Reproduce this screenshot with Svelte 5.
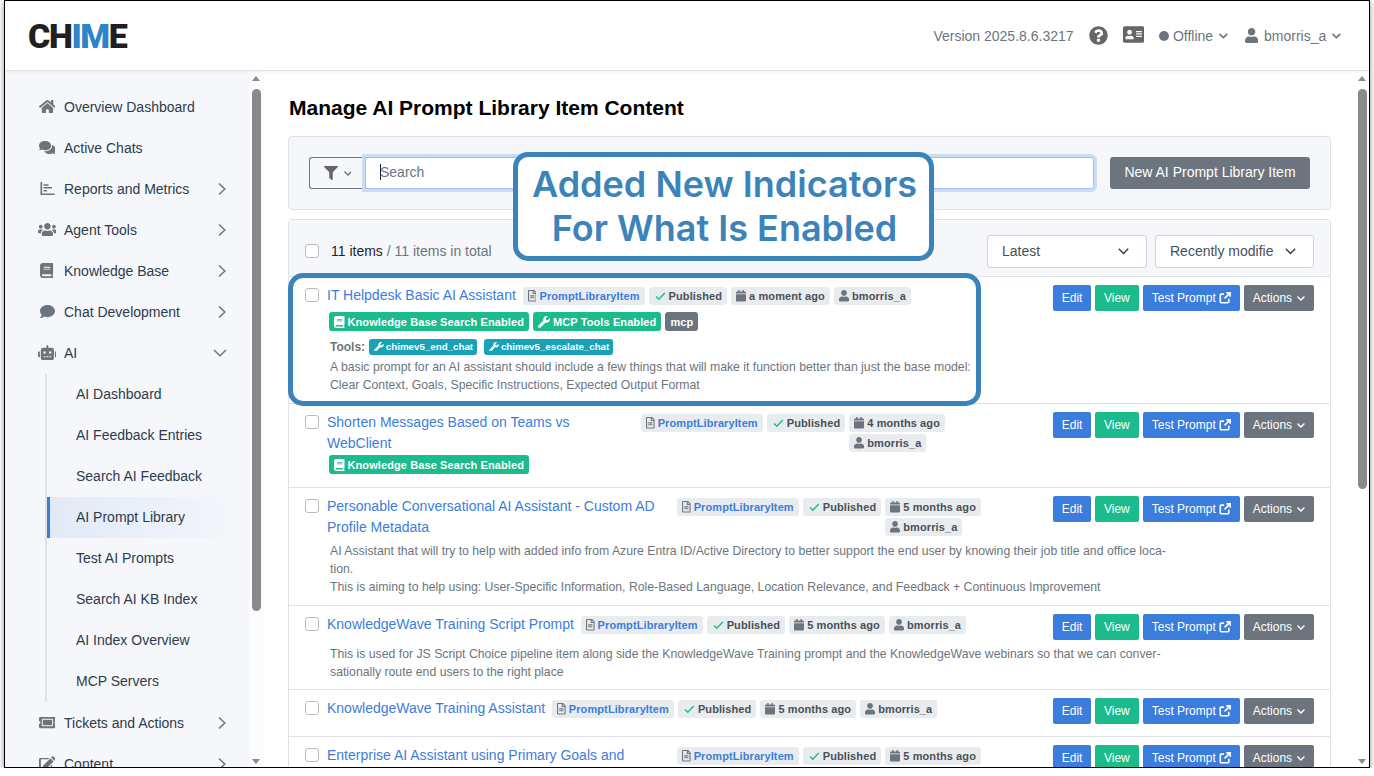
<script>
	const icons = {
		home: ["0 0 576 512", "M280.37 148.26L96 300.11V464a16 16 0 0 0 16 16l112.06-.29a16 16 0 0 0 15.92-16V368a16 16 0 0 1 16-16h64a16 16 0 0 1 16 16v95.64a16 16 0 0 0 16 16.05L464 480a16 16 0 0 0 16-16V300L295.67 148.26a12.19 12.19 0 0 0-15.3 0zM571.6 251.47L488 182.56V44.05a12 12 0 0 0-12-12h-56a12 12 0 0 0-12 12v72.61L318.47 43a48 48 0 0 0-61 0L4.34 251.47a12 12 0 0 0-1.6 16.9l25.5 31A12 12 0 0 0 45.15 301l235.22-193.74a12.19 12.19 0 0 1 15.3 0L530.9 301a12 12 0 0 0 16.9-1.6l25.5-31a12 12 0 0 0-1.7-16.93z"],
		comments: ["0 0 576 512", "M416 192c0-88.4-93.1-160-208-160S0 103.6 0 192c0 34.3 14.1 65.9 38 92-13.4 30.2-35.5 54.2-35.8 54.5-2.2 2.3-2.8 5.7-1.5 8.7S4.8 352 8 352c36.6 0 66.9-12.3 88.7-25 32.2 15.7 70.3 25 111.3 25 114.9 0 208-71.6 208-160zm122 220c23.9-26 38-57.7 38-92 0-66.9-53.5-124.2-129.3-148.1.9 6.6 1.3 13.3 1.3 20.1 0 105.9-107.7 192-240 192-10.8 0-21.3-.8-31.7-1.9C207.8 439.6 281.8 480 368 480c41 0 79.1-9.2 111.3-25 21.8 12.7 52.1 25 88.7 25 3.2 0 6.1-1.9 7.3-4.8 1.3-2.9.7-6.3-1.5-8.7-.3-.3-22.4-24.2-35.8-54.5z"],
		chart: ["0 0 512 512", "M16 32h56v392h424v56H16zM120 112h170v52H120zM120 208h290v52H120zM120 304h120v52H120z"],
		users: ["0 0 640 512", "M96 224c35.3 0 64-28.7 64-64s-28.7-64-64-64-64 28.7-64 64 28.7 64 64 64zm448 0c35.3 0 64-28.7 64-64s-28.7-64-64-64-64 28.7-64 64 28.7 64 64 64zm32 32h-64c-17.6 0-33.5 7.1-45.1 18.6 40.3 22.1 68.9 62 75.1 109.4h66c17.7 0 32-14.3 32-32v-32c0-35.3-28.7-64-64-64zm-256 0c61.9 0 112-50.1 112-112S381.9 32 320 32 208 82.1 208 144s50.1 112 112 112zm76.8 32h-8.3c-20.8 10-43.9 16-68.5 16s-47.6-6-68.5-16h-8.3C179.6 288 128 339.6 128 403.2V432c0 26.5 21.5 48 48 48h288c26.5 0 48-21.5 48-48v-28.8c0-63.6-51.6-115.2-115.2-115.2zm-223.7-13.4C161.5 263.1 145.6 256 128 256H64c-35.3 0-64 28.7-64 64v32c0 17.7 14.3 32 32 32h65.9c6.3-47.4 34.9-87.3 75.2-109.4z"],
		book: ["0 0 448 512", "M448 360V24c0-13.3-10.7-24-24-24H96C43 0 0 43 0 96v320c0 53 43 96 96 96h328c13.3 0 24-10.7 24-24v-16c0-7.5-3.5-14.3-8.9-18.7-4.2-15.4-4.2-59.3 0-74.7 5.4-4.3 8.9-11.1 8.9-18.6zM128 134c0-3.3 2.7-6 6-6h212c3.3 0 6 2.7 6 6v20c0 3.3-2.7 6-6 6H134c-3.3 0-6-2.7-6-6v-20zm0 64c0-3.3 2.7-6 6-6h212c3.3 0 6 2.7 6 6v20c0 3.3-2.7 6-6 6H134c-3.3 0-6-2.7-6-6v-20zm253.4 250H96c-17.7 0-32-14.3-32-32 0-17.6 14.4-32 32-32h285.4c-1.9 17.1-1.9 46.9 0 64z"],
		comment: ["0 0 512 512", "M256 32C114.6 32 0 125.1 0 240c0 49.6 21.4 95 57 130.7C44.5 421.1 2.7 466 2.2 466.5c-2.2 2.3-2.8 5.7-1.5 8.7S4.8 480 8 480c66.3 0 116-31.8 140.6-51.4 32.7 12.3 69 19.4 107.4 19.4 141.4 0 256-93.1 256-208S397.4 32 256 32z"],
		robot: ["0 0 640 512", "M32,224H64V416H32A31.96166,31.96166,0,0,1,0,384V256A31.96166,31.96166,0,0,1,32,224Zm512-48V448a64.06328,64.06328,0,0,1-64,64H160a64.06328,64.06328,0,0,1-64-64V176a79.974,79.974,0,0,1,80-80H288V32a32,32,0,0,1,64,0V96H464A79.974,79.974,0,0,1,544,176ZM264,256a40,40,0,1,0-40,40A39.997,39.997,0,0,0,264,256Zm-8,128H192v32h64Zm96,0H288v32h64ZM456,256a40,40,0,1,0-40,40A39.997,39.997,0,0,0,456,256Zm-8,128H384v32h64ZM640,256V384a31.96166,31.96166,0,0,1-32,32H576V224h32A31.96166,31.96166,0,0,1,640,256Z"],
		ticket: ["0 0 576 512", "M128 160h320v192H128V160zm400 96c0 26.51 21.49 48 48 48v96c0 26.51-21.49 48-48 48H48c-26.51 0-48-21.49-48-48v-96c26.51 0 48-21.49 48-48s-21.49-48-48-48v-96c0-26.51 21.49-48 48-48h480c26.51 0 48 21.49 48 48v96c-26.51 0-48 21.49-48 48zm-48-104c0-13.255-10.745-24-24-24H120c-13.255 0-24 10.745-24 24v208c0 13.255 10.745 24 24 24h336c13.255 0 24-10.745 24-24V152z"],
		edit: ["0 0 576 512", "M402 336v112H64V110h242l48-46H48C21 64 0 85 0 112v352c0 27 21 48 48 48h352c27 0 48-21 48-48V290zM490 14l72 72c10 10 10 26 0 36l-40 40-108-108 40-40c10-10 26-10 36 0zM390 78l108 108-256 256-118 12 12-118z"],
		user: ["0 0 448 512", "M224 256c70.7 0 128-57.3 128-128S294.7 0 224 0 96 57.3 96 128s57.3 128 128 128zm89.6 32h-16.7c-22.2 10.2-46.9 16-72.9 16s-50.6-5.8-72.9-16h-16.7C60.2 288 0 348.2 0 422.4V464c0 26.5 21.5 48 48 48h352c26.5 0 48-21.5 48-48v-41.6c0-74.2-60.2-134.4-134.4-134.4z"],
		wrench: ["0 0 512 512", "M507.73 109.1c-2.24-9.03-13.54-12.09-20.12-5.51l-74.36 74.36-67.88-11.31-11.31-67.88 74.36-74.36c6.62-6.62 3.43-17.9-5.66-20.16-47.38-11.74-99.55.91-136.58 37.93-39.64 39.64-50.55 97.1-34.05 147.2L18.74 402.76c-24.99 24.99-24.99 65.51 0 90.5 24.99 24.99 65.51 24.99 90.5 0l213.21-213.21c50.12 16.71 107.47 5.68 147.37-34.22 37.07-37.07 49.7-89.32 37.91-136.73zM64 472c-13.25 0-24-10.75-24-24 0-13.26 10.75-24 24-24s24 10.74 24 24c0 13.25-10.75 24-24 24z"],
		filter: ["0 0 512 512", "M487.976 0H24.028C2.71 0-8.047 25.866 7.058 40.971L192 225.941V432c0 7.831 3.821 15.17 10.237 19.662l80 55.98C298.02 518.69 320 507.493 320 487.98V225.941l184.947-184.97C520.021 25.896 509.338 0 487.976 0z"],
		down: ["0 0 448 512", "M207.029 381.476L12.686 187.132c-9.373-9.373-9.373-24.569 0-33.941l22.667-22.667c9.357-9.357 24.522-9.375 33.901-.04L224 284.505l154.745-154.021c9.379-9.335 24.544-9.317 33.901.04l22.667 22.667c9.373 9.373 9.373 24.569 0 33.941L240.971 381.476c-9.373 9.372-24.569 9.372-33.942 0z"],
		help: ["0 0 512 512", "M504 256c0 136.997-111.043 248-248 248S8 392.997 8 256C8 119.083 119.043 8 256 8s248 111.083 248 248zM262.655 90c-54.497 0-89.255 22.957-116.549 63.758-3.536 5.286-2.353 12.415 2.715 16.258l34.699 26.31c5.205 3.947 12.621 3.008 16.665-2.122 17.864-22.658 30.113-35.797 57.303-35.797 20.429 0 45.698 13.148 45.698 32.958 0 14.976-12.363 22.667-32.534 33.976C247.128 238.528 216 254.941 216 296v4c0 6.627 5.373 12 12 12h56c6.627 0 12-5.373 12-12v-1.333c0-28.462 83.186-29.647 83.186-106.667 0-58.002-60.165-102-116.531-102zM256 338c-25.365 0-46 20.635-46 46 0 25.364 20.635 46 46 46s46-20.636 46-46c0-25.365-20.635-46-46-46z"],
		card: ["0 0 576 512", "M528 32H48C21.5 32 0 53.5 0 80v352c0 26.5 21.5 48 48 48h480c26.5 0 48-21.5 48-48V80c0-26.5-21.5-48-48-48zm-352 96c35.3 0 64 28.7 64 64s-28.7 64-64 64-64-28.7-64-64 28.7-64 64-64zm112 236.8c0 10.6-10 19.2-22.4 19.2H86.4C74 384 64 375.4 64 364.8v-19.2c0-31.8 30.1-57.6 67.2-57.6h5c12.3 5.1 25.7 8 39.8 8s27.6-2.9 39.8-8h5c37.1 0 67.2 25.8 67.2 57.6v19.2zM512 312c0 4.4-3.6 8-8 8H360c-4.4 0-8-3.6-8-8v-16c0-4.4 3.6-8 8-8h144c4.4 0 8 3.6 8 8v16zm0-64c0 4.4-3.6 8-8 8H360c-4.4 0-8-3.6-8-8v-16c0-4.4 3.6-8 8-8h144c4.4 0 8 3.6 8 8v16zm0-64c0 4.4-3.6 8-8 8H360c-4.4 0-8-3.6-8-8v-16c0-4.4 3.6-8 8-8h144c4.4 0 8 3.6 8 8v16z"],
		calendar: ["0 0 448 512", "M12 192h424c6.6 0 12 5.4 12 12v260c0 26.5-21.5 48-48 48H48c-26.5 0-48-21.5-48-48V204c0-6.6 5.4-12 12-12zm436-44v-36c0-26.5-21.5-48-48-48h-48V12c0-6.6-5.4-12-12-12h-40c-6.6 0-12 5.4-12 12v52H160V12c0-6.6-5.4-12-12-12h-40c-6.6 0-12 5.4-12 12v52H48C21.5 64 0 85.5 0 112v36c0 6.6 5.4 12 12 12h424c6.6 0 12-5.4 12-12z"],
		file: ["0 0 384 512", "M288 248v28c0 6.6-5.4 12-12 12H108c-6.6 0-12-5.4-12-12v-28c0-6.6 5.4-12 12-12h168c6.6 0 12 5.4 12 12zm-12 72H108c-6.6 0-12 5.4-12 12v28c0 6.6 5.4 12 12 12h168c6.6 0 12-5.4 12-12v-28c0-6.6-5.4-12-12-12zm108-188.100V464c0 26.5-21.5 48-48 48H48c-26.5 0-48-21.5-48-48V48C0 21.5 21.5 0 48 0h204.100C264.800 0 277 5.100 286 14.100L369.900 98c9 8.900 14.100 21.200 14.100 33.900zm-128-80V128h76.100L256 51.900zM336 464V176H232c-13.300 0-24-10.700-24-24V48H48v416h288z"]
	};

	const nav = [
		{ label: "Overview Dashboard", icon: "home" },
		{ label: "Active Chats", icon: "comments" },
		{ label: "Reports and Metrics", icon: "chart", more: true },
		{ label: "Agent Tools", icon: "users", more: true },
		{ label: "Knowledge Base", icon: "book", more: true },
		{ label: "Chat Development", icon: "comment", more: true },
		{
			label: "AI",
			icon: "robot",
			open: true,
			children: ["AI Dashboard", "AI Feedback Entries", "Search AI Feedback", "AI Prompt Library", "Test AI Prompts", "Search AI KB Index", "AI Index Overview", "MCP Servers"]
		},
		{ label: "Tickets and Actions", icon: "ticket", more: true },
		{ label: "Content", icon: "edit", more: true }
	];

	const rows = [
		{
			title: "IT Helpdesk Basic AI Assistant",
			when: "a moment ago",
			height: 127,
			tags: [{ icon: "book", text: "Knowledge Base Search Enabled" }, { icon: "wrench", text: "MCP Tools Enabled" }],
			extra: "mcp",
			tools: ["chimev5_end_chat", "chimev5_escalate_chat"],
			desc: ["A basic prompt for an AI assistant should include a few things that will make it function better than just the base model:", "Clear Context, Goals, Specific Instructions, Expected Output Format"]
		},
		{
			title: "Shorten Messages Based on Teams vs WebClient",
			titleWidth: 307,
			stacked: true,
			when: "4 months ago",
			height: 84,
			tags: [{ icon: "book", text: "Knowledge Base Search Enabled" }]
		},
		{
			title: "Personable Conversational AI Assistant - Custom AD Profile Metadata",
			titleWidth: 343,
			stacked: true,
			when: "5 months ago",
			height: 118,
			desc: ["AI Assistant that will try to help with added info from Azure Entra ID/Active Directory to better support the end user by knowing their job title and office loca-", "tion.", "This is aiming to help using: User-Specific Information, Role-Based Language, Location Relevance, and Feedback + Continuous Improvement"]
		},
		{
			title: "KnowledgeWave Training Script Prompt",
			when: "5 months ago",
			height: 84,
			desc: ["This is used for JS Script Choice pipeline item along side the KnowledgeWave Training prompt and the KnowledgeWave webinars so that we can conver-", "sationally route end users to the right place"]
		},
		{ title: "KnowledgeWave Training Assistant", when: "5 months ago", height: 47 },
		{
			title: "Enterprise AI Assistant using Primary Goals and",
			titleWidth: 343,
			stacked: true,
			when: "5 months ago",
			height: 60
		}
	];
</script>

{#snippet icon(name, cls = "")}
	<svg class="ic {cls}" viewBox={icons[name][0]} aria-hidden="true"><path d={icons[name][1]} /></svg>
{/snippet}

{#snippet scrollbar(cls)}
	<div class="scrollbar {cls}">
		<span class="arrow up"></span>
		<span class="thumb"></span>
		<span class="arrow dn"></span>
	</div>
{/snippet}

<div class="frame">
	<header>
		<div class="logo">CH<span>IM</span>E</div>
		<div class="top-right">
			<span class="version">Version 2025.8.6.3217</span>
			{@render icon("help", "help")}
			{@render icon("card", "idcard")}
			<span class="drop status"><i class="dot"></i>Offline{@render icon("down", "caret")}</span>
			<span class="drop who">{@render icon("user", "who-ic")}bmorris_a{@render icon("down", "caret")}</span>
		</div>
	</header>

	<div class="body">
		<nav>
			<ul class="menu">
				{#each nav as item}
					<li>
						<div class="link">
							<span class="nav-ic">{@render icon(item.icon)}</span>
							<span class="label">{item.label}</span>
							{#if item.more}
								<svg class="chev" viewBox="0 0 8 14"><path d="M1 1.500 6.800 7 1 12.500" /></svg>
							{:else if item.open}
								<svg class="chev open" viewBox="0 0 14 8"><path d="M1 1 7 6.800 13 1" /></svg>
							{/if}
						</div>
						{#if item.children}
							<ul class="sub">
								{#each item.children as child}
									<li class:active={child === "AI Prompt Library"}>{child}</li>
								{/each}
							</ul>
						{/if}
					</li>
				{/each}
			</ul>
		</nav>
		{@render scrollbar("side")}

		<main>
			<h1>Manage AI Prompt Library Item Content</h1>

			<section class="search-card">
				<button class="filter">{@render icon("filter", "filter-ic")}{@render icon("down", "caret")}</button>
				<div class="search"><i class="cursor"></i>Search</div>
				<button class="new">New AI Prompt Library Item</button>
			</section>

			<section class="list">
				<div class="list-head">
					<span class="check"></span>
					<span class="count"><b>11 items</b> / 11 items in total</span>
					<div class="select s1">Latest<svg viewBox="0 0 11 7"><path d="M.8.8 5.500 5.500 10.200.8" /></svg></div>
					<div class="select s2">Recently modifie<svg viewBox="0 0 11 7"><path d="M.8.8 5.500 5.500 10.200.8" /></svg></div>
				</div>

				{#each rows as row}
					<article class="row" class:wrapped={row.stacked} style="height: {row.height}px">
						<div class="row-main">
							<div class="head-line">
								<span class="check"></span>
								<a class="title" href="#top" style={row.titleWidth ? `width: ${row.titleWidth}px` : ""}>{row.title}</a>
								<div class="meta">
									<span class="badge type">{@render icon("file")}PromptLibraryItem</span>
									<span class="badge"><svg class="tick" viewBox="0 0 12 12"><path d="M2 6.500 4.800 9.300 10.800 3" /></svg>Published</span>
									<div class="when" class:stacked={row.stacked}>
										<span class="badge">{@render icon("calendar")}{row.when}</span>
										<span class="badge">{@render icon("user")}bmorris_a</span>
									</div>
								</div>
							</div>
							{#if row.tags}
								<div class="tags">
									{#each row.tags as tag}
										<span class="tag">{@render icon(tag.icon)}{tag.text}</span>
									{/each}
									{#if row.extra}<span class="tag extra">{row.extra}</span>{/if}
								</div>
							{/if}
							{#if row.tools}
								<div class="tools">
									<b>Tools:</b>
									{#each row.tools as tool}
										<span class="tool">{@render icon("wrench")}{tool}</span>
									{/each}
								</div>
							{/if}
							{#if row.desc}
								<div class="desc">
									{#each row.desc as line}<div>{line}</div>{/each}
								</div>
							{/if}
						</div>
						<div class="actions">
							<button class="blue edit">Edit</button>
							<button class="green">View</button>
							<button class="blue test">Test Prompt
								<svg viewBox="0 0 14 14"><path d="M6 2.500H2.500a1 1 0 0 0-1 1v8a1 1 0 0 0 1 1h8a1 1 0 0 0 1-1V8M8.500 1h4.500v4.500M13 1 6.500 7.500" /></svg>
							</button>
							<button class="grey">Actions{@render icon("down", "caret")}</button>
						</div>
					</article>
				{/each}
			</section>
		</main>
		{@render scrollbar("page")}
	</div>

	<!-- annotations drawn over the page -->
	<div class="callout">Added New Indicators<br />For What Is Enabled</div>
	<div class="highlight"></div>
</div>

<style>
	:global(body) {
		margin: 0;
		background: #fff;
		overflow: hidden;
	}
	* {
		box-sizing: border-box;
	}
	.frame {
		position: relative;
		display: flex;
		flex-direction: column;
		width: 1366px;
		height: 768px;
		margin-left: 4px;
		border: 1px solid #000;
		box-shadow: 0 2px 6px rgba(0, 0, 0, 0.45);
		background: #fff;
		overflow: hidden;
		font-family: "Liberation Sans", Arial, sans-serif;
		font-size: 14px;
		color: #495057;
	}
	.ic {
		display: inline-block;
		height: 1em;
		fill: currentColor;
		flex: none;
	}

	header {
		flex: none;
		display: flex;
		align-items: center;
		justify-content: space-between;
		height: 70px;
		padding: 0 28px 0 23px;
		border-bottom: 1px solid #dfe2e8;
		box-shadow: 0 1px 3px rgba(0, 0, 0, 0.06);
		z-index: 1;
	}
	.logo {
		font-family: Roboto, sans-serif;
		font-weight: 900;
		font-size: 34px;
		letter-spacing: -1.4px;
		color: #231f20;
		line-height: 1;
	}
	.logo span {
		color: #2a85c9;
	}
	.top-right {
		display: flex;
		align-items: center;
		color: #6c757d;
	}
	.version {
		margin-right: 15px;
	}
	.help {
		height: 19px;
		color: #666;
		margin-right: 15px;
	}
	.idcard {
		height: 19px;
		color: #666;
		margin: -3px 15px 0 0;
	}
	.drop {
		display: flex;
		align-items: center;
	}
	.dot {
		width: 10px;
		height: 10px;
		border-radius: 50%;
		background: #6c757d;
		margin-right: 4px;
	}
	.caret {
		height: 10px;
		margin-left: 6px;
	}
	.status {
		margin-right: 17px;
	}
	.who-ic {
		height: 15px;
		margin-right: 6px;
	}

	.body {
		flex: 1;
		display: flex;
		min-height: 0;
	}
	nav {
		flex: none;
		width: 244px;
		background: #f5f7fb;
		padding-top: 15px;
		overflow: hidden;
	}
	ul {
		list-style: none;
		margin: 0;
		padding: 0;
	}
	.link {
		display: flex;
		align-items: center;
		height: 41px;
		padding-left: 33px;
		color: #2e3b4b;
	}
	.nav-ic {
		width: 18px;
		margin-right: 8px;
		display: flex;
		justify-content: center;
		color: #6c757d;
		font-size: 15px;
	}
	.label {
		flex: 1;
	}
	.chev {
		width: 8px;
		height: 14px;
		margin-right: 23px;
		fill: none;
		stroke: #6c757d;
		stroke-width: 1.5;
	}
	.chev.open {
		width: 14px;
		height: 8px;
		margin-right: 22px;
	}
	.sub {
		margin: 1px 0 0 40px;
		border-left: 2px solid #dfe2e8;
	}
	.sub li {
		height: 41px;
		line-height: 41px;
		padding-left: 29px;
		color: #2e3b4b;
	}
	.sub li.active {
		padding-left: 26px;
		border-left: 3px solid #3b7ddd;
		background: linear-gradient(90deg, #e1eaf7, #f5f7fb);
	}

	.scrollbar {
		flex: none;
		position: relative;
		width: 15px;
		background: #fbfcfd;
	}
	.scrollbar.page {
		background: #fff;
		width: 14px;
	}
	.thumb {
		position: absolute;
		left: 3px;
		top: 18px;
		width: 9px;
		border-radius: 5px;
		background: #8a8a8a;
	}
	.side .thumb {
		height: 522px;
	}
	.page .thumb {
		height: 400px;
	}
	.arrow {
		position: absolute;
		left: 3px;
		width: 0;
		height: 0;
		border-left: 4.5px solid transparent;
		border-right: 4.5px solid transparent;
	}
	.arrow.up {
		top: 5px;
		border-bottom: 5px solid #8a8a8a;
	}
	.arrow.dn {
		bottom: 3px;
		border-top: 5px solid #8a8a8a;
	}

	main {
		flex: 1;
		min-width: 0;
		padding: 25px 24px 0;
		overflow: hidden;
	}
	h1 {
		margin: 0 0 16px 1px;
		font-size: 21px;
		line-height: 24px;
		font-weight: 700;
		color: #000;
	}
	.search-card {
		display: flex;
		align-items: center;
		height: 74px;
		padding: 0 20px;
		background: #f5f7fb;
		border: 1px solid #dfe2e8;
		border-radius: 4px;
		margin-bottom: 9px;
	}
	.filter {
		display: flex;
		align-items: center;
		justify-content: center;
		width: 56px;
		height: 32px;
		padding: 0;
		background: #f5f7fb;
		border: 1px solid #6c757d;
		border-right: 0;
		border-radius: 3px 0 0 3px;
		color: #6c757d;
	}
	.filter-ic {
		height: 14px;
		color: #666;
	}
	.filter .caret {
		height: 9px;
	}
	.search {
		flex: 1;
		display: flex;
		align-items: center;
		height: 32px;
		padding: 0 0 2px 14px;
		background: #fff;
		border: 1px solid #9dbeee;
		box-shadow: 0 0 0 3px #cbdcf6;
		border-radius: 0 3px 3px 0;
		color: #6c757d;
	}
	.cursor {
		width: 1px;
		height: 16px;
		background: #222;
		margin-right: -1px;
	}
	.new {
		width: 200px;
		height: 32px;
		margin-left: 16px;
		padding: 0 0 2px;
		border: 0;
		border-radius: 3px;
		background: #6c757d;
		color: #fff;
		font: 14px "Liberation Sans", Arial, sans-serif;
	}

	.list {
		border: 1px solid #dfe2e8;
		border-bottom: 0;
		border-radius: 4px 4px 0 0;
	}
	.list-head {
		display: flex;
		align-items: center;
		height: 57px;
		padding: 6px 16px 0;
		background: #f5f7fb;
		border-bottom: 1px solid #dfe2e8;
	}
	.check {
		flex: none;
		width: 14px;
		height: 14px;
		background: #fff;
		border: 1px solid #b9bdc2;
		border-radius: 3px;
	}
	.count {
		flex: 1;
		margin-left: 12px;
		color: #6c757d;
	}
	.count b {
		font-weight: 400;
		color: #212529;
	}
	.select {
		display: flex;
		align-items: center;
		justify-content: space-between;
		width: 160px;
		height: 33px;
		padding: 0 17px 0 14px;
		background: #fff;
		border: 1px solid #ced4da;
		border-radius: 3px;
		color: #495057;
	}
	.select svg {
		width: 11px;
		height: 7px;
		fill: none;
		stroke: #343a40;
		stroke-width: 1.4;
	}
	.s2 {
		margin-left: 8px;
		width: 159px;
	}

	.row {
		display: flex;
		justify-content: space-between;
		padding: 8px 16px 0;
		border-bottom: 1px solid #dfe2e8;
		overflow: hidden;
	}
	.row-main {
		min-width: 0;
	}
	.head-line {
		display: flex;
		align-items: flex-start;
	}
	.head-line .check {
		margin: 3px 8px 0 0;
	}
	.title {
		flex: none;
		font-size: 14px;
		line-height: 21px;
		color: #3b7ddd;
		text-decoration: none;
	}
	.meta {
		display: flex;
		align-items: flex-start;
		gap: 4px;
		margin: 2px 0 0 7px;
	}
	.when {
		display: flex;
		gap: 4px;
	}
	.when.stacked {
		flex-direction: column;
		align-items: flex-start;
		gap: 2px;
	}
	.badge {
		display: inline-flex;
		align-items: center;
		gap: 3px;
		height: 18px;
		padding: 0 5px;
		border-radius: 3px;
		background: #e9ecef;
		color: #495057;
		font-size: 11px;
		font-weight: 700;
		letter-spacing: 0.1px;
		white-space: nowrap;
	}
	.badge .ic {
		height: 11.5px;
		color: #6c757d;
	}
	.type {
		color: #3b7ddd;
	}
	.tick {
		width: 12px;
		height: 12px;
		fill: none;
		stroke: #1cbb8c;
		stroke-width: 1.4;
	}
	.tags {
		display: flex;
		gap: 4px;
		margin: 6px 0 0 24px;
	}
	.wrapped .tags {
		margin-top: 1px;
	}
	.tag {
		display: inline-flex;
		align-items: center;
		gap: 3px;
		height: 19px;
		padding: 0 5px;
		border-radius: 3px;
		background: #1cbb8c;
		color: #fff;
		font-size: 11px;
		font-weight: 700;
		letter-spacing: 0.1px;
		white-space: nowrap;
	}
	.tag .ic {
		height: 12px;
	}
	.tag.extra {
		background: #6c757d;
	}
	.tools {
		display: flex;
		align-items: center;
		margin: 7px 0 0 25px;
		height: 17px;
		font-size: 12px;
		color: #6c757d;
	}
	.tool {
		display: inline-flex;
		align-items: center;
		gap: 2px;
		height: 16px;
		margin-left: 7px;
		padding: 0 4px 0 5px;
		border-radius: 3px;
		background: #17a2b8;
		color: #fff;
		font-size: 9.75px;
		font-weight: 700;
	}
	.tool:first-of-type {
		margin-left: 4px;
	}
	.desc {
		margin: 10px 0 0 25px;
		font-size: 12.25px;
		line-height: 18px;
		color: #6c757d;
		white-space: nowrap;
	}
	.wrapped .desc {
		margin-top: 4px;
	}
	.tools + .desc {
		margin-top: 3px;
	}

	.actions {
		flex: none;
		display: flex;
		gap: 4px;
	}
	.actions button {
		display: flex;
		align-items: center;
		height: 26px;
		padding: 0 9px;
		border: 0;
		border-radius: 2px;
		color: #fff;
		font: 12px "Liberation Sans", Arial, sans-serif;
		white-space: nowrap;
	}
	.actions .edit {
		padding: 0 8.5px;
	}
	.blue {
		background: #3b7ddd;
	}
	.green {
		background: #1cbb8c;
	}
	.grey {
		background: #6c757d;
	}
	.test svg {
		width: 12px;
		height: 12px;
		margin-left: 3px;
		fill: none;
		stroke: #fff;
		stroke-width: 1.9;
	}
	.actions .caret {
		height: 9px;
		margin-left: 5px;
	}

	.callout {
		position: absolute;
		left: 508px;
		top: 151px;
		width: 421px;
		height: 109px;
		padding: 0 0 2px 2px;
		display: flex;
		align-items: center;
		justify-content: center;
		text-align: center;
		background: #fff;
		border: 5px solid #3c83b9;
		border-radius: 15px;
		color: #3c83b9;
		font-family: Inter, sans-serif;
		font-size: 36px;
		font-weight: 600;
		line-height: 44px;
	}
	.highlight {
		position: absolute;
		left: 283px;
		top: 272px;
		width: 693px;
		height: 133px;
		border: 5px solid #3c83b9;
		border-radius: 15px;
		pointer-events: none;
	}
</style>
